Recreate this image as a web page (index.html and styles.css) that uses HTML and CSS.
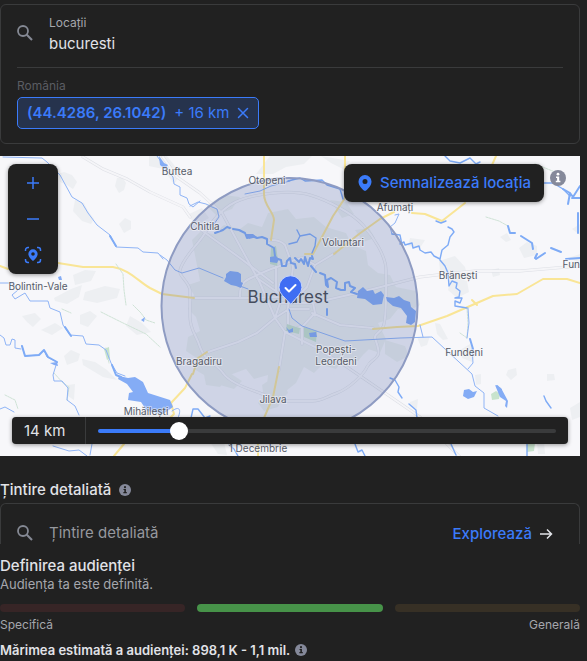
FILE: index.html
```html
<!DOCTYPE html>
<html lang="ro">
<head>
<meta charset="utf-8">
<meta name="viewport" content="width=device-width, initial-scale=1">
<title>Audiență</title>
<link rel="stylesheet" href="styles.css">
</head>
<body>
<svg class="defs" aria-hidden="true">
  <symbol id="search" viewBox="0 0 16 16"><circle cx="6" cy="6" r="5" fill="none" stroke="currentColor" stroke-width="1.8"/><path d="M9.8 9.8 15 15" stroke="currentColor" stroke-width="2.1"/></symbol>
  <symbol id="info" viewBox="0 0 16 16"><circle cx="8" cy="8" r="8" fill="currentColor"/><circle cx="8" cy="4.2" r="1.4" class="info-mark"/><path d="M6 6.5h3.2v4.300h1.200v1.500H5.800v-1.500h1.300V8H6z" class="info-mark"/></symbol>
  <symbol id="pin" viewBox="0 0 14 16"><path fill="currentColor" fill-rule="evenodd" d="M7 0a6.500 6.500 0 0 0-6.500 6.500C.5 10.600 4 14 6 15.600q1 .8 2 0C10 14 13.500 10.600 13.500 6.500A6.500 6.500 0 0 0 7 0zm0 4a2.500 2.500 0 1 1 0 5 2.500 2.500 0 0 1 0-5z"/></symbol>
</svg>
<main class="page">
  <section class="locations">
    <div class="search-row">
      <svg class="icon-search"><use href="#search"/></svg>
      <div class="field">
        <label for="loc">Locații</label>
        <input id="loc" type="text" value="bucuresti">
      </div>
    </div>
    <div class="country">România</div>
    <div class="chip"><strong>(44.4286, 26.1042)</strong><span>+ 16 km</span><button type="button" aria-label="Elimină"><svg viewBox="0 0 12 12"><path d="M1.500 1.500l9 9m0-9l-9 9" stroke="currentColor" stroke-width="1.500" stroke-linecap="round"/></svg></button></div>
  </section>

  <section class="map">
    <svg class="map-art" viewBox="0 156 580 300" preserveAspectRatio="xMidYMid slice" aria-label="București">
      <defs>
        <g id="roads">
          <path d="M83 157l20 12 24 10 23 13 33 15 7 10M163 157l14 20 23 16 22 20 38 70 15 35 10 14 32 16 30 19 73 50 40 40"/>
          <path d="M180 270C184 256 198 245 205 233S224 206 240 200 290 189 310 195 353 214 363 225 386 256 386 270 387 320 383 327 374 334 375 338 380 350 378 355 370 360 367 367 350 388 337 393 321 401 313 401H283C275 401 266 395 257 392S229 382 223 373 204 360 200 347 190 330 190 317V290C188 280 178 276 180 270z"/>
          <path d="M208 352l30-10 19-9 18-15 5-15h33l44-10 63-16 25-3 30-3h45l59-5M312 313l28 12 33 3M335 253l-20 12-8 22-16 16M270 240c9 0 12 2 15 5l8 22-5 40v19M190 298h57l34-1M240 298c-1-15 6-18 13-21s16-8 24-10 18-9 26-9l12 7M313 303l2 10-12 13-17 6M285 332l-6 38M197 227l43 31 33 25M257 278l26 18M276 266v26M302 328v16M275 318l14-9h20"/>
        </g>
      </defs>
      <g class="town">
        <path d="M58 174l6-2 8 3 5 7-4 7-6-4-7-3zM117 178l5-1 4 6-2 7-5 3-4-7zM75 200l9 3 4 8 6 8-3 5-9-3-9-10zM119 224l6-6 6 3 0 8-7 4zM73 275l12-5 11 1-5 10-16 4zM54 298l17-9 11-4-3 12-12 7-12-3zM85 292l20-6 15 3-3 9-20 5-14-3zM149 156l18 0 14 18-7 10-11-15-14-3zM187 215l15-7 7 10-12 7z"/>
        <path d="M22 316l13-3 6 6-8 8-6-5zM41 330l14-7 8 5-11 7zM64 356l7-6 9 4-2 7-11 4zM82 359l13 3 12 8 10 10-14-3-20-12zM80 315l10-4 7 5-9 11-8-3zM130 316l12 7 9 9-14 3-11-9zM68 385l7-1-1 16-6-4z"/>
        <path d="M270 156h42l-8 8-18 3-13 7h-17zM321 156l29 5-7 8-12-6zM410 238l15 2-5 8-12-2zM439 261l16-5 10 11 3 11-15 2-13-9zM451 276l16 5 2 11-12 6-9-8zM491 270l8-2 1 7-7 2zM500 237l7-4 4 7-5 2zM519 248l8-6 10 4 0 9-13 3zM572 229l8-5v11zM568 258l12-4v9z"/>
        <path d="M435 323l5 1 8 15-5 1-6-6zM417 337l13-1-3 9-6 2zM460 350l10-6 6 10-4 8-10-4zM475 375l6-1 0 10-5 1zM508 370l8-2 1 7-6 5-5-5zM547 374l7 0 1 6-8 1zM570 408l10-6v15l-8 3zM410 402l8-3-1 10-7-3zM537 443l7-2 1 13h-7zM210 442l14 0 3 13-9-1z"/>
      </g>
      <path class="urban" d="M192 240l8-8 14 2 10-9 16 4 8-6 14 4 6-14 20-4 8 10 18-2 12 10 20 6 6 12 14 6 2 14 10 8 12 2 6 12 20 4 4 14-12 6-10-2-8 10-12 4 8 16-6 14-12-4-10 12-14-2-8 10-14-4-8 8-10-6-8 16-10 8-8 16-14 4-6-8 8-10 2-18-14 4-8-10-16 6-10 12-14-2-2-10-10-6 4-10-12-8 2-14 12-6-4-14-8-8 6-14-6-10 12-4zM206 205l18-10 16 2-8 12-16 6zM330 200l16 2 8 12-12 4zM350 340l16-4 8 8-10 10-14-4zM214 375l16-2 12 8-8 8-14-4zM385 340l20 6 4 10-12 6-12-8zM262 385l12-8 10 4 4 12-10 10-14-4zM355 230l14-2 6 10-12 4z"/>
      <use class="road" href="#roads"/><use class="road-fill" href="#roads"/>
      <g class="major">
        <path d="M0 266l8 3M58 263l25 4h30c16 2 26 15 37 21l12 6 32 4M264 156v38c0 12 10 18 10 26l-3 20M345 156v42l-12 18-20 38h-8M334 254l25-20 21-15 14-7M412 213l13 1 17 7 23-18M373 329l24-2 21-1 29-10 46-20 24-2 26-15h24l13 4M279 367l-6 30-9 21M207 352l-9 6-5 16M192 374l-7 14-14 15 3 11-10 10M124 444l-10 12M496 156l-4 9M258 444v12M472 300l5 5"/>
      </g>
      <g class="green">
        <path d="M116 264l7 10 1 16 2 15M101 312l20 10 25 12 14 13M133 305l8 8 5 7 9 3M5 395l10 5 3 9M54 373l9 10 6 4-2 13M106 348l3 15M467 308l1 15-1 15M460 333l7 5M486 217l13 4 9 5M535 164l20 8M62 309l9 4"/>
      </g>
      <g class="park"><path d="M271 248l5-2 2 14-1 6-7-2zM287 324l9 3 4 1-1 6-13-3zM304 327l13 4-1 11-12-5zM104 349l5-2 1 11-3 2zM491 394l5-3 4 3-1 5-7 1zM527 443l8 0-1 8-7 1z"/></g>
      <g class="river">
        <path d="M3 157l39 1 5 4 13 13 12 22 10 6 6 10 9 12 13 10 6 12 22 1 5 4 15 1 5 6M157 156l5 7 4 7 7 7 1 7 6 3v8l7 3 2 6 4 3 7-6M190 206l8-4 8 2 6 3 5 2 2 8-5 7-6 1M0 283h13l5 7-6 5 3 4 10-6 5 8h18l2 7 10 4 3 13 7 10 13 1 3 8 13 1 7 5 5 13 6 10 8 3M0 335l4 3 2 7 4 0 2-6 3 1v8l6 1M22 346l3 10 14-1 5-5 3 7 10 5-4 13 1 6 8 0 6 7-1 12 8 6 4 9M0 409l5-2 9 5M53 446l16 5 10-1 8 6M92 444l-2 11M172 411c8-6 10-1 5 9"/>
        <path d="M160 255l7 5 8 10 7 3 17-5 24 10M245 194l15-3 11-5 19-5M240 286l8 3M289 309l3 9 10 8 43 15 55-3 32-1 40 37 3 12 9 7v15l14 8M420 325l3 12M395 215l4-1-4 9-5 4 2 7M468 308l1 15-2 15M472 349l1 14-5 6M502 184h10"/>
      </g>
      <g class="brook">
        <path d="M191 418l2-9 5 0 7 9 5-2M288 181l12-3 5 3 17-1 5 5 13 4 3 10M289 244l8-2 3-6 10-2 6 4-1 8-3 7M300 236l-3-6M400 244l4-2 1 3 7-2 1 5 6-2 1 4 5 3 6-1 3 4 6 3 2-9 6-5 2-8 4-5-2-3-4-2M440 260l5 6 3 7 1 13 3-5 5 2-1 5 4 3-1 6-4 1 7 0-2 5-5-2v5l12 2M436 221l5 2 5-2M392 234l8 1 2 10M543 183h10l10 6 7 7M544 396l2 5 5 7M390 378l5 2 4 7-1 5 4 6M409 404l7 6 1 8M451 444l5 11M527 444v12M355 444l3 8 4-2 3 6M229 445l5 4 4 7M445 156l5 5 10 2 10-5 6 6 4-2"/>
      </g>
      <g class="water-line">
        <path d="M215 233l8-3 4-3 3 1M233 229l6 1 6 3 2 5 5-2 5 2 5-1 5 2v5l7 4 1 8M278 259l3 1 1 6 4 0 1-5 3-3 1 5 4 1 1 4M295 258l4 4 2-3 3 5 1-7 3 9 2-8 3 1-1-3M311 266l5 6M320 273l5 2 1 10 2 2-1-7 4-2 6 4-1 6 5 2 4 0 0-7 4-1 1 4 5 2-4 4 6 2M22 346l3 10 14-1 5-5 4 7 9 5M508 226l2 7h5M521 236l11 7 1 6M535 258l2-4M536 259l9-6M551 248l10 4M566 259l14-1M578 213v20M563 189l7 4 3 4 7-11M570 193l-2 11M572 198h8M327 309v6M470 339l3 10M497 386l4 4M110 236l6 10M65 327l6 9M112 365l4 10 5 2"/>
      </g>
      <g class="water">
        <path d="M159 156l5 7 4 2-3 4-5-4zM128 378l7-1 8 5 5 11 22 7 3 7-10 7-16-3-6-9-13-2 1-7 4-1-6-8-9-5 1-3zM226 274l4-3 8 1 3 2v8l2 1-2 5-5-2-5-1-7-4 2-4zM270 257l6-1 3 3-2 4-7-1zM245 234h8l4 3-8 2zM358 291l5-4 4 4 6-1 2 4 6-3 3 4-2 9-9 1-8-6-8-1zM386 297l8 1 5-2 5 4 6 2 1 5 5 4-1 11-4 3-5-2 1-7-6-8-8-2-6-5zM464 390l5-1 4 3 4-1-3 6-6 2-5-3zM309 333l7-1 1 5-7 0zM495 385l6 3 7 13-1 7-2-2 1-5-6-4zM286 327l3 3 4-2 0 4-4 1zM58 277l3-1 1 4-3 0zM50 363l7-1 1 4-4-1zM141 320l4-3-1 5z"/>
      </g>
      <circle class="radius" cx="289.500" cy="306" r="128"/>
      <g class="labels">
        <text x="177" y="175">Buftea</text><text x="267" y="184">Otopeni</text><text x="205" y="230">Chitila</text><text x="343" y="246">Voluntari</text><text x="395" y="211">Afumați</text><text x="458" y="279">Brănești</text><text x="580" y="268" class="edge">Fun</text><text x="38" y="290">Bolintin-Vale</text><text x="199" y="365">Bragadiru</text><text x="336" y="353">Popești-</text><text x="336" y="365">Leordeni</text><text x="464" y="356">Fundeni</text><text x="273" y="403">Jilava</text><text x="146" y="415">Mihăilești</text><text x="258" y="452">1 Decembrie</text><text x="288" y="303" class="city">Bucharest</text>
      </g>
      <path class="marker" d="M290.500 304l-8-8.500a11.500 11.500 0 1 1 16 0z"/><path class="check" d="M285.500 288l3.500 3.500 6.500-6.500"/>
    </svg>
    <div class="zoom">
      <button type="button" aria-label="Mărește"><svg viewBox="0 0 18 18"><path d="M9 3v12M3 9h12"/></svg></button>
      <button type="button" aria-label="Micșorează"><svg viewBox="0 0 18 18"><path d="M3 9h12"/></svg></button>
      <button type="button" aria-label="Centrează"><svg viewBox="0 0 18 18"><path d="M1.500 5V4a2.500 2.500 0 0 1 2.500-2.500h1M13 1.500h1A2.500 2.500 0 0 1 16.500 4v1M16.500 13v1a2.500 2.500 0 0 1-2.500 2.500h-1M5 16.500H4A2.500 2.500 0 0 1 1.500 14v-1"/><use href="#pin" x="4" y="3" width="10" height="12"/></svg></button>
    </div>
    <div class="drop">
      <button type="button"><svg><use href="#pin"/></svg>Semnalizează locația</button>
      <svg class="info on-map"><use href="#info"/></svg>
    </div>
    <div class="distance">
      <label for="km">14 km</label>
      <div class="range"><input id="km" type="range" min="1" max="80" value="14"></div>
    </div>
  </section>

  <section class="targeting">
    <div class="heading"><label for="detail">Țintire detaliată</label><svg class="info small"><use href="#info"/></svg></div>
    <div class="detail-box">
      <svg class="icon-search"><use href="#search"/></svg>
      <input id="detail" type="text" placeholder="Țintire detaliată">
      <a href="#">Explorează<svg viewBox="0 0 14 12"><path d="M1 6h11M8 1.500L12.500 6 8 10.500"/></svg></a>
    </div>
  </section>

  <section class="audience">
    <h2>Definirea audienței</h2>
    <p>Audiența ta este definită.</p>
    <div class="bars"><i class="narrow"></i><i class="good"></i><i class="broad"></i></div>
    <div class="ends"><span>Specifică</span><span>Generală</span></div>
    <div class="estimate"><strong>Mărimea estimată a audienței: 898,1 K - 1,1 mil.</strong><svg class="info small"><use href="#info"/></svg></div>
  </section>
</main>
</body>
</html>
```
FILE: styles.css
```css
* { box-sizing: border-box; }
body {
  margin: 0;
  background: #212121;
  color: #e2e3e8;
  font: 15px/20px Inter, "Liberation Sans", sans-serif;
}
.defs { position: absolute; width: 0; height: 0; }
.page { padding: 4px 7px 0 0; }
svg { display: block; flex: none; }
button { border: 0; background: none; padding: 0; font: inherit; color: #3b7bfa; cursor: pointer; }
input { min-width: 0; border: 0; outline: 0; margin: 0; padding: 0; background: none; font: inherit; color: inherit; }
.icon-search { width: 16px; height: 16px; color: #858994; }
.info { --mark: #212121; width: 16px; height: 16px; color: #85899a; }
.info.small { width: 12px; height: 12px; }
.info.on-map { --mark: #fff; margin-top: 6px; }
.info-mark { fill: var(--mark); }

.locations { border: 1px solid #3a3b3c; border-radius: 6px; padding: 8px 16px 14px; }
.search-row { display: flex; gap: 16px; padding-bottom: 12px; border-bottom: 1px solid #3a3b3c; }
.search-row .icon-search { margin-top: 12px; }
.field { flex: 1; display: flex; flex-direction: column; }
.field label { font-size: 12px; line-height: 20px; color: #a5a7ad; }
.field input { line-height: 22px; height: 22px; }
.country { margin-top: 8px; font-size: 12px; line-height: 20px; color: #5b5d63; }
.chip {
  display: inline-flex; align-items: center; gap: 8px; height: 32px; margin-top: 1px;
  padding: 0 9px; border: 1px solid #3b7bfa; border-radius: 5px;
  background: #26334d; color: #3b7bfa; vertical-align: top;
}
.chip strong { font-weight: 600; }
.chip svg { width: 12px; height: 12px; }

.map { position: relative; height: 300px; margin-top: 12px; overflow: hidden; background: #f7f7fa; }
.map-art { width: 100%; height: 100%; fill: none; stroke-linejoin: round; stroke-linecap: round; }
.town { fill: #edeff2; }
.urban { fill: #ebefee; }
.road { stroke: #dddfe5; stroke-width: 3; }
.road-fill { stroke: #f5f5f8; stroke-width: 2; }
.major { stroke: #f9e596; stroke-width: 2; }
.green { stroke: #cfe3d6; stroke-width: 1; stroke-dasharray: 2 1; }
.park { fill: #c8e3cd; }
.river { stroke: #8fb4f6; stroke-width: 1; }
.brook { stroke: #7eabf6; stroke-width: 1.4; }
.water-line { stroke: #7eabf6; stroke-width: 2; }
.water { fill: #84acf5; }
.radius { fill: #465c9e; fill-opacity: .22; stroke: #8e9bc2; stroke-width: 2; }
.labels {
  fill: #565b68; stroke: #f7f7fa; stroke-opacity: .5; stroke-width: 2; paint-order: stroke;
  font-size: 10px; text-anchor: middle;
}
.labels .edge { text-anchor: end; }
.labels .city { font-size: 17px; fill: #454d5e; stroke: none; }
.marker { fill: #3f6df3; stroke: #c8d6fb; stroke-width: 1; }
.check { stroke: #fff; stroke-width: 2; }

.zoom, .drop button, .distance { background: #212121; box-shadow: 0 1px 4px rgba(0, 0, 0, .4); }
.zoom { position: absolute; left: 8px; top: 8px; width: 50px; border-radius: 8px; padding: 1px 0; }
.zoom button { display: grid; place-items: center; width: 100%; height: 36px; }
.zoom svg { width: 18px; height: 18px; fill: none; stroke: currentColor; stroke-width: 1.5; }
.zoom use { stroke: none; }
.drop { position: absolute; right: 14px; top: 8px; display: flex; gap: 6px; }
.drop button { display: flex; align-items: center; gap: 8px; height: 38px; padding: 0 13px 0 14px; border-radius: 8px; font-weight: 500; }
.drop button svg { width: 14px; height: 16px; }
.distance { position: absolute; left: 12px; right: 12px; bottom: 12px; height: 27px; display: flex; border-radius: 4px; }
.distance label { width: 74px; padding-left: 12px; line-height: 27px; border-right: 1px solid #3a3b3c; }
.range { flex: 1; display: flex; padding: 0 12px; }
.range input { flex: 1; appearance: none; height: 27px; }
.range input::-webkit-slider-runnable-track { height: 4px; border-radius: 2px; background: linear-gradient(to right, #3b7bfa 18%, #3a3b3c 18%); }
.range input::-webkit-slider-thumb { appearance: none; width: 18px; height: 18px; margin-top: -7px; border-radius: 50%; background: #fff; }

.targeting { margin-top: 24px; }
.heading { display: flex; align-items: center; gap: 8px; font-weight: 500; }
.detail-box {
  display: flex; align-items: center; gap: 16px; height: 41px; margin-top: 3px;
  padding: 17px 26px 0 16px; border: 1px solid #3a3b3c; border-bottom: 0; border-radius: 6px 6px 0 0;
}
.detail-box input { flex: 1; }
.detail-box input::placeholder { color: #96989e; opacity: 1; }
.detail-box a { display: flex; align-items: center; gap: 7px; color: #3b7bfa; font-weight: 500; text-decoration: none; padding-top: 3px; }
.detail-box a svg { width: 14px; height: 12px; fill: none; stroke: #e2e3e8; stroke-width: 1.5; }

.audience { padding-top: 12px; }
.audience h2 { margin: 0; font-size: 15px; line-height: 20px; font-weight: 500; }
.audience p { margin: 0; font-size: 13px; line-height: 16px; color: #a5a7ad; }
.bars { display: grid; grid-template-columns: repeat(3, 1fr); gap: 12px; margin-top: 12px; }
.bars i { height: 8px; border-radius: 4px; }
.narrow { background: #372526; }
.good { background: #479349; }
.broad { background: #373025; }
.ends { display: flex; justify-content: space-between; margin-top: 3px; font-size: 12px; line-height: 20px; color: #a5a7ad; }
.estimate { display: flex; align-items: center; gap: 5px; margin-top: 5px; font-size: 13px; line-height: 20px; }
.estimate strong { font-weight: 600; }
```
